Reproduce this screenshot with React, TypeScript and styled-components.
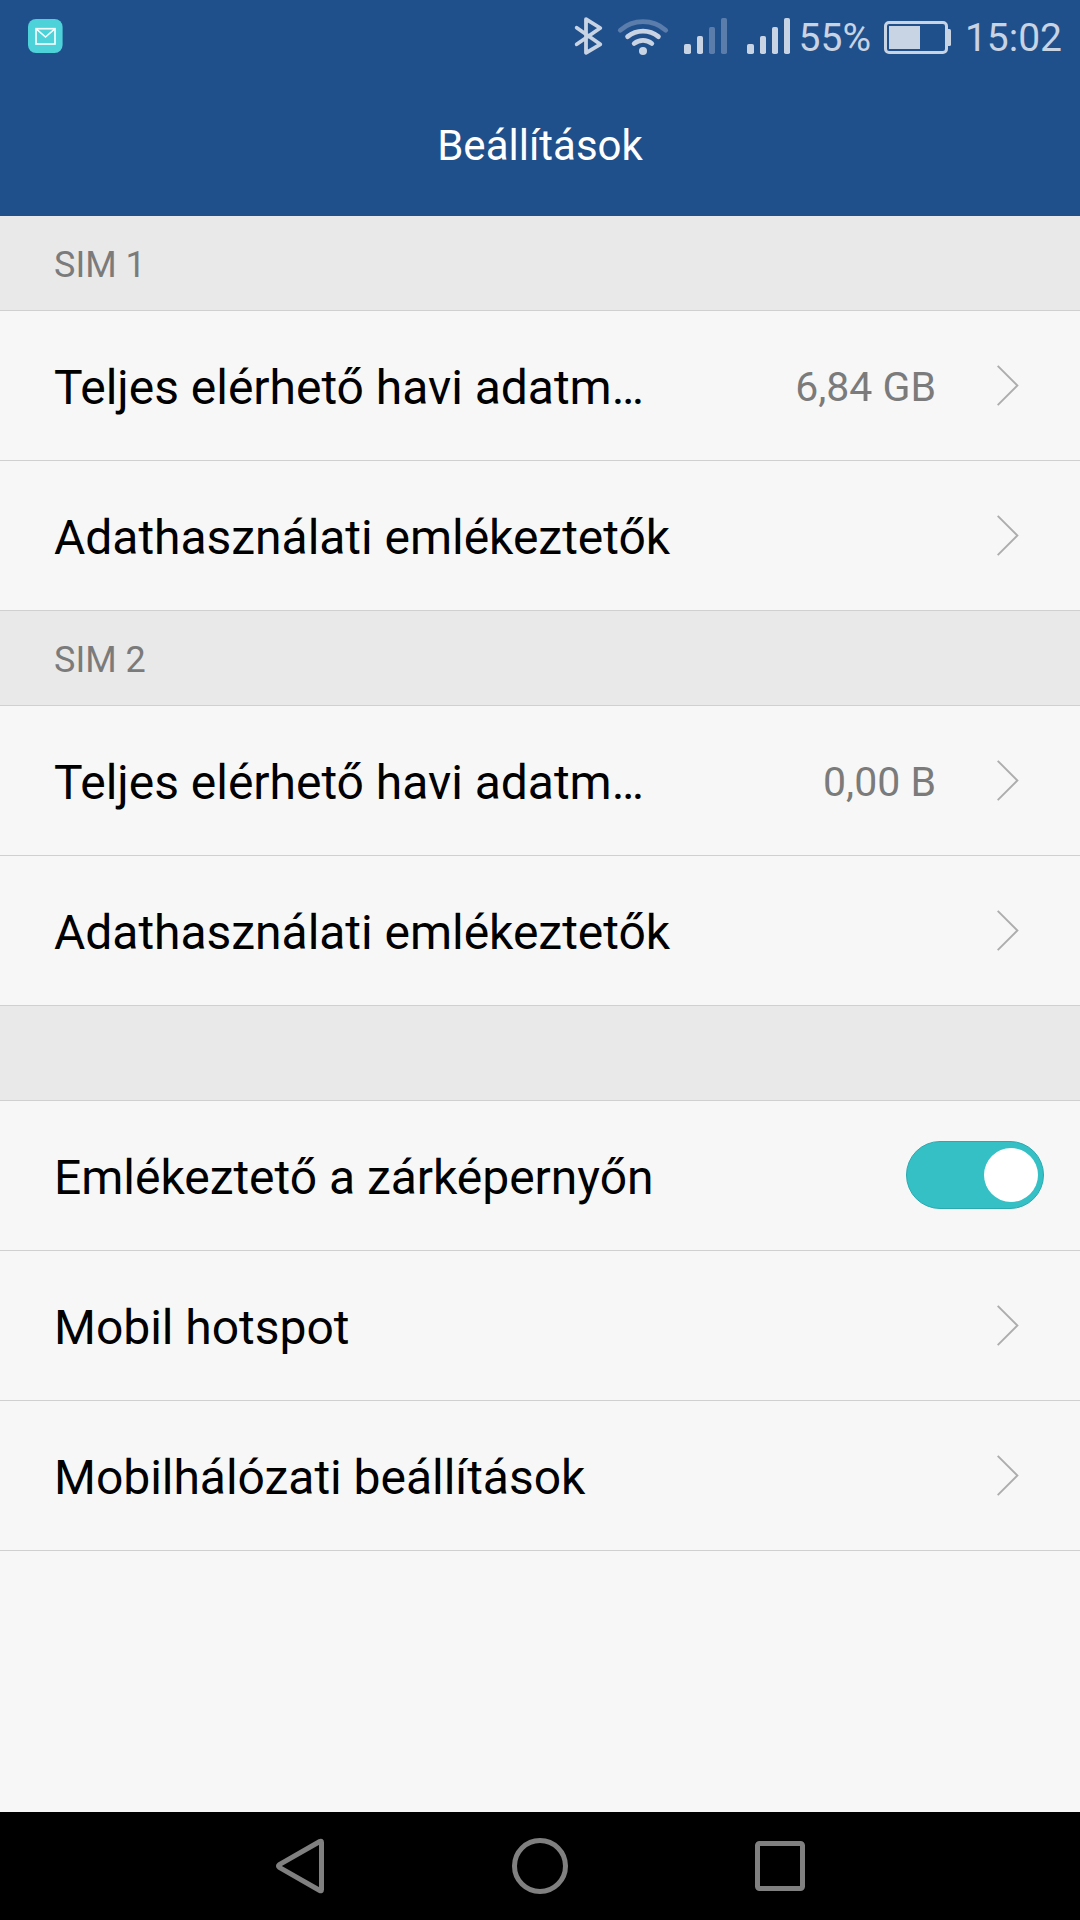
import React from "react";
import styled, { createGlobalStyle } from "styled-components";

const GlobalStyle = createGlobalStyle`
  * { box-sizing: border-box; }
  body { margin: 0; background: #f7f7f7; }
`;

const Screen = styled.div`
  display: flex;
  flex-direction: column;
  width: 1080px;
  height: 1920px;
  overflow: hidden;
  background: #f7f7f7;
  font-family: Roboto, "Noto Sans", sans-serif;
`;

const Header = styled.header`
  flex: none;
  display: flex;
  flex-direction: column;
  height: 216px;
  background: #20508c;
`;

const StatusBar = styled.div`
  display: flex;
  justify-content: space-between;
  height: 72px;
  padding: 0 18px 0 28px;
  color: #c8d3e3;
`;

const StatusGroup = styled.div`
  display: flex;
  align-items: flex-start;
`;

const StatusText = styled.span<{ $width: number }>`
  width: ${(p) => p.$width}px;
  padding-top: 14px;
  font-size: 39px;
  line-height: 48px;
  text-align: right;
  white-space: nowrap;
`;

const TitleBar = styled.h1`
  margin: 0;
  height: 144px;
  padding-top: 49px;
  color: #fff;
  font-size: 42px;
  font-weight: 400;
  line-height: 49px;
  text-align: center;
`;

const List = styled.main`
  flex: 1;
  display: flex;
  flex-direction: column;
`;

const SectionLabel = styled.h2`
  flex: none;
  margin: 0;
  height: 95px;
  padding: 28px 54px 0;
  border-bottom: 1px solid #d0d0d0;
  background: #e9e9e9;
  color: #7b7b7b;
  font-size: 36px;
  font-weight: 400;
  line-height: 43px;
`;

const Row = styled.div<{ $end?: number }>`
  flex: none;
  display: flex;
  align-items: center;
  height: 150px;
  padding: 0 ${(p) => p.$end ?? 60}px 0 54px;
  border-bottom: 1px solid #d0d0d0;
`;

const RowLabel = styled.span`
  flex: 1;
  padding-top: 3px;
  color: #000;
  font-size: 48px;
  line-height: 57px;
  letter-spacing: -0.03px;
  white-space: nowrap;
`;

const RowValue = styled.span`
  margin-right: 60px;
  padding-top: 3px;
  color: #7b7b7b;
  font-size: 41px;
  line-height: 50px;
  white-space: nowrap;
`;

const Switch = styled.div`
  display: flex;
  justify-content: flex-end;
  align-items: center;
  width: 138px;
  height: 68px;
  margin-top: -1px;
  padding-right: 5px;
  border: 1px solid #2aaab0;
  border-radius: 34px;
  background: #35c0c6;
`;

const Knob = styled.div`
  width: 54px;
  height: 54px;
  border-radius: 50%;
  background: #fff;
`;

const NavBar = styled.nav`
  flex: none;
  display: flex;
  justify-content: center;
  align-items: center;
  gap: 180px;
  height: 108px;
  background: #000;
`;

const MailIcon = () => (
  <svg width="36" height="72" viewBox="28 0 36 72">
    <rect x="28" y="19" width="34.6" height="34" rx="8" fill="#4dd2d9" />
    <g fill="none" stroke="#f4fdfd">
      <rect x="36" y="28.7" width="19" height="15.3" strokeWidth="1.7" />
      <path d="M36.5 29.2 45.5 37 54.5 29.2" strokeWidth="1.6" />
    </g>
  </svg>
);

const RadioIcons = () => (
  <svg width="226" height="72" viewBox="570 0 226 72" fill="none">
    <path
      d="M576.7 27.7 600.3 44.3 586 52.8V19.2L600.3 28 576.7 44.3"
      stroke="#c8d3e3"
      strokeWidth="3.8"
      strokeLinecap="round"
      strokeLinejoin="round"
    />
    <path d="M620.3 30.2a34.5 34.5 0 0 1 45.4 0" stroke="#5b7dab" strokeWidth="4.8" strokeLinecap="round" />
    <g stroke="#c8d3e3" strokeWidth="4.8" strokeLinecap="round">
      <path d="M627.6 36.7a24 24 0 0 1 30.8 0" />
      <path d="M634.2 43.5a14 14 0 0 1 17.6 0" />
    </g>
    <circle cx="643" cy="51" r="4" fill="#c8d3e3" />
    <g fill="#c8d3e3">
      <rect x="684" y="44" width="7" height="10" rx="1.8" />
      <rect x="697" y="36" width="6" height="18" rx="1.8" />
      <rect x="747" y="44" width="7" height="10" rx="1.8" />
      <rect x="760" y="36" width="6" height="18" rx="1.8" />
      <rect x="772" y="27" width="6" height="27" rx="1.8" />
      <rect x="784" y="18" width="6" height="36" rx="1.8" />
    </g>
    <g fill="#5b7dab">
      <rect x="709" y="27" width="6" height="27" rx="1.8" />
      <rect x="721" y="18" width="6" height="36" rx="1.8" />
    </g>
  </svg>
);

const BatteryIcon = () => (
  <svg width="84" height="72" viewBox="871 0 84 72" fill="#c8d3e3">
    <rect x="885.5" y="22.5" width="61" height="30" rx="3.5" fill="none" stroke="#c8d3e3" strokeWidth="3" />
    <rect x="889" y="26" width="31" height="23" />
    <path d="M948 29h1.5q1.5 0 1.5 1.5v14q0 1.5-1.5 1.5H948z" />
  </svg>
);

const Chevron = () => (
  <svg width="24" height="43" viewBox="0 0 24 43" fill="none">
    <path d="M1.700 1.800 21.400 21.500 1.700 41.200" stroke="#adadad" strokeWidth="1.900" />
  </svg>
);

const LinkRow = ({ label, value }: { label: string; value?: string }) => (
  <Row>
    <RowLabel>{label}</RowLabel>
    {value && <RowValue>{value}</RowValue>}
    <Chevron />
  </Row>
);

export default function App() {
  return (
    <Screen>
      <GlobalStyle />
      <Header>
        <StatusBar>
          <MailIcon />
          <StatusGroup>
            <RadioIcons />
            <StatusText $width={75}>55%</StatusText>
            <BatteryIcon />
            <StatusText $width={107}>15:02</StatusText>
          </StatusGroup>
        </StatusBar>
        <TitleBar>Beállítások</TitleBar>
      </Header>
      <List>
        <SectionLabel>SIM 1</SectionLabel>
        <LinkRow label="Teljes elérhető havi adatm…" value="6,84 GB" />
        <LinkRow label="Adathasználati emlékeztetők" />
        <SectionLabel>SIM 2</SectionLabel>
        <LinkRow label="Teljes elérhető havi adatm…" value="0,00 B" />
        <LinkRow label="Adathasználati emlékeztetők" />
        <SectionLabel />
        <Row $end={36}>
          <RowLabel>Emlékeztető a zárképernyőn</RowLabel>
          <Switch>
            <Knob />
          </Switch>
        </Row>
        <LinkRow label="Mobil hotspot" />
        <LinkRow label="Mobilhálózati beállítások" />
      </List>
      <NavBar>
        <svg width="60" height="60" viewBox="270 1836 60 60" fill="none" stroke="#808080" strokeWidth="5" strokeLinejoin="round">
          <path d="M321.5 1842.500v47q0 2-1.700 1L279.300 1867.300q-1.700-1.300 0-2.600L319.800 1841.500q1.700-1 1.700 1z" />
        </svg>
        <svg width="60" height="60" viewBox="0 0 60 60" fill="none" stroke="#808080" strokeWidth="5">
          <circle cx="30" cy="30" r="25.5" />
        </svg>
        <svg width="60" height="60" viewBox="0 0 60 60" fill="none" stroke="#808080" strokeWidth="5">
          <rect x="7.500" y="7.500" width="45" height="45" rx="2" />
        </svg>
      </NavBar>
    </Screen>
  );
}
